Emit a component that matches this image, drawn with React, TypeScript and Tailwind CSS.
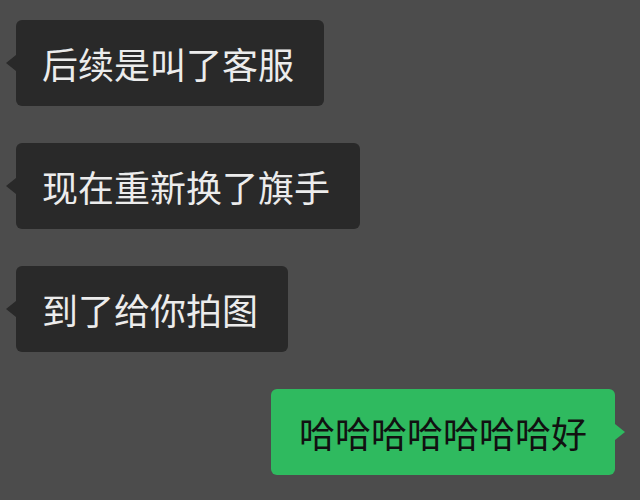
import React from "react";

type Msg = { text: string; mine?: boolean };

const messages: Msg[] = [
  { text: "后续是叫了客服" },
  { text: "现在重新换了旗手" },
  { text: "到了给你拍图" },
  { text: "哈哈哈哈哈哈哈好", mine: true },
];

function Bubble({ text, mine }: Msg) {
  return (
    <div className={mine ? "flex justify-end pr-[25px]" : "flex justify-start pl-4"}>
      <div
        className={
          mine
            ? "relative rounded-md bg-[#2fba5f] pl-[28px] pr-[28px] py-[24px] text-[36px] leading-[38px] text-[#111111]"
            : "relative rounded-md bg-[#292929] pl-[26px] pr-[30px] py-[24px] text-[36px] leading-[38px] text-[#ececec]"
        }
      >
        {text}
        {mine ? (
          <span className="absolute right-[-10px] top-1/2 -mt-[8px] h-0 w-0 border-y-[8px] border-l-[10px] border-y-transparent border-l-[#2fba5f]" />
        ) : (
          <span className="absolute left-[-10px] top-1/2 -mt-[8px] h-0 w-0 border-y-[8px] border-r-[10px] border-y-transparent border-r-[#292929]" />
        )}
      </div>
    </div>
  );
}

export default function App() {
  return (
    <div
      className="flex h-[500px] w-[640px] flex-col gap-[37px] overflow-hidden bg-[#4c4c4c] pt-[20px]"
      style={{ fontFamily: '"Noto Sans CJK SC", "Noto Sans", sans-serif' }}
    >
      {messages.map((m, i) => (
        <Bubble key={i} {...m} />
      ))}
    </div>
  );
}
